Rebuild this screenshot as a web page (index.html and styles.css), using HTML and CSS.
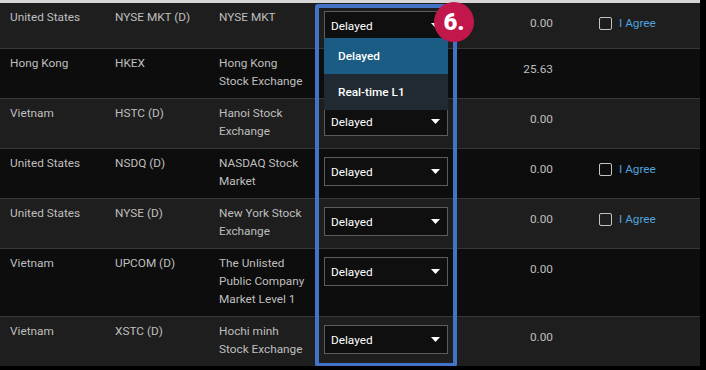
FILE: index.html
```html
<!DOCTYPE html>
<html>
  <head>
    <title>Market Data Subscriptions</title>
    <link rel="stylesheet" href="styles.css">
  </head>
  <body>
    <div class="frame">
      <div class="topbar"></div>
      <table class="markets">
        <colgroup>
          <col class="col-country">
          <col class="col-code">
          <col class="col-name">
          <col class="col-feed">
          <col class="col-value">
          <col class="col-agree">
        </colgroup>
        <tr class="row-light">
          <td>United States</td>
          <td>NYSE MKT (D)</td>
          <td class="name">NYSE MKT</td>
          <td class="feed">
            <div class="picker">
              <div class="select">
                <span>Delayed</span>
                <svg class="caret" width="9" height="5" viewBox="0 0 9 5"><path d="M0 0H9L4.5 5Z" fill="#fff"/></svg>
              </div>
              <ul class="options">
                <li class="active">Delayed</li>
                <li>Real-time L1</li>
              </ul>
            </div>
          </td>
          <td class="value">0.00</td>
          <td class="agree"><label><span class="box"></span>I Agree</label></td>
        </tr>
        <tr class="row-dark">
          <td>Hong Kong</td>
          <td>HKEX</td>
          <td class="name">Hong Kong Stock Exchange</td>
          <td class="feed"></td>
          <td class="value">25.63</td>
          <td class="agree"></td>
        </tr>
        <tr class="row-light">
          <td>Vietnam</td>
          <td>HSTC (D)</td>
          <td class="name">Hanoi Stock Exchange</td>
          <td class="feed">
            <div class="select">
              <span>Delayed</span>
              <svg class="caret" width="9" height="5" viewBox="0 0 9 5"><path d="M0 0H9L4.5 5Z" fill="#fff"/></svg>
            </div>
          </td>
          <td class="value">0.00</td>
          <td class="agree"></td>
        </tr>
        <tr class="row-dark">
          <td>United States</td>
          <td>NSDQ (D)</td>
          <td class="name">NASDAQ Stock Market</td>
          <td class="feed">
            <div class="select">
              <span>Delayed</span>
              <svg class="caret" width="9" height="5" viewBox="0 0 9 5"><path d="M0 0H9L4.5 5Z" fill="#fff"/></svg>
            </div>
          </td>
          <td class="value">0.00</td>
          <td class="agree"><label><span class="box"></span>I Agree</label></td>
        </tr>
        <tr class="row-light">
          <td>United States</td>
          <td>NYSE (D)</td>
          <td class="name">New York Stock Exchange</td>
          <td class="feed">
            <div class="select">
              <span>Delayed</span>
              <svg class="caret" width="9" height="5" viewBox="0 0 9 5"><path d="M0 0H9L4.5 5Z" fill="#fff"/></svg>
            </div>
          </td>
          <td class="value">0.00</td>
          <td class="agree"><label><span class="box"></span>I Agree</label></td>
        </tr>
        <tr class="row-dark">
          <td>Vietnam</td>
          <td>UPCOM (D)</td>
          <td class="name">The Unlisted Public Company Market Level 1</td>
          <td class="feed">
            <div class="select">
              <span>Delayed</span>
              <svg class="caret" width="9" height="5" viewBox="0 0 9 5"><path d="M0 0H9L4.5 5Z" fill="#fff"/></svg>
            </div>
          </td>
          <td class="value">0.00</td>
          <td class="agree"></td>
        </tr>
        <tr class="row-light">
          <td>Vietnam</td>
          <td>XSTC (D)</td>
          <td class="name">Hochi minh Stock Exchange</td>
          <td class="feed">
            <div class="select">
              <span>Delayed</span>
              <svg class="caret" width="9" height="5" viewBox="0 0 9 5"><path d="M0 0H9L4.5 5Z" fill="#fff"/></svg>
            </div>
          </td>
          <td class="value">0.00</td>
          <td class="agree"></td>
        </tr>
      </table>
      <div class="focus-box"></div>
      <div class="badge">6.</div>
    </div>
  </body>
</html>
```

FILE: styles.css
```css
body {
  margin: 0;
  background: #000;
  font-family: Roboto, "Liberation Sans", Arial, sans-serif;
  font-size: 11.8px;
  color: #bfbfbf;
}

.frame {
  position: relative;
  width: 700px;
}

.topbar {
  height: 3px;
  background: #d6d6d6;
}

.markets {
  width: 700px;
  table-layout: fixed;
  border-collapse: collapse;
}

.col-country { width: 105px; }
.col-code { width: 104px; }
.col-name { width: 105px; }
.col-feed { width: 146px; }
.col-value { width: 103px; }
.col-agree { width: 137px; }

.markets td {
  vertical-align: top;
  padding: 5px 10px 8px 10px;
  line-height: 18px;
  border-top: 1px solid #383838;
}

.markets td.name {
  padding-right: 7px;
}

.markets tr:first-child td {
  border-top: none;
}

.row-light { background: #1e1e1e; }
.row-dark { background: #0d0d0d; }

.markets td.feed {
  padding-top: 8px;
}

.markets td.value {
  text-align: right;
  padding-top: 11px;
}

.markets td.agree {
  padding-top: 11px;
  padding-left: 36px;
}

.agree label {
  display: flex;
  align-items: center;
  gap: 7px;
  color: #4fa2dd;
}

.agree .box {
  width: 13px;
  height: 13px;
  box-sizing: border-box;
  border: 1px solid #c4c4c4;
  border-radius: 2px;
}

.picker {
  position: relative;
}

.select {
  width: 124px;
  height: 29px;
  box-sizing: border-box;
  border: 1px solid #5c5c5c;
  background: #0f0f0f;
  display: flex;
  align-items: center;
  justify-content: space-between;
  padding: 0 7px 0 6px;
  color: #fff;
}

.options {
  position: absolute;
  top: 27px;
  left: 0;
  width: 124px;
  margin: 0;
  padding: 0;
  list-style: none;
  z-index: 2;
}

.options li {
  height: 36px;
  line-height: 36px;
  padding-left: 14px;
  background: #1f2a33;
  color: #fff;
  font-weight: 500;
}

.options li.active {
  background: #1a5c83;
}

.focus-box {
  position: absolute;
  left: 315px;
  top: 4px;
  width: 142px;
  height: 363px;
  box-sizing: border-box;
  border: 4px solid #4373c6;
  border-radius: 3px;
  z-index: 1;
}

.badge {
  position: absolute;
  left: 434px;
  top: 2px;
  width: 40px;
  height: 40px;
  border-radius: 50%;
  background: #c2174b;
  color: #fff;
  font-weight: 900;
  font-size: 24px;
  line-height: 40px;
  text-align: center;
  z-index: 3;
}
```
